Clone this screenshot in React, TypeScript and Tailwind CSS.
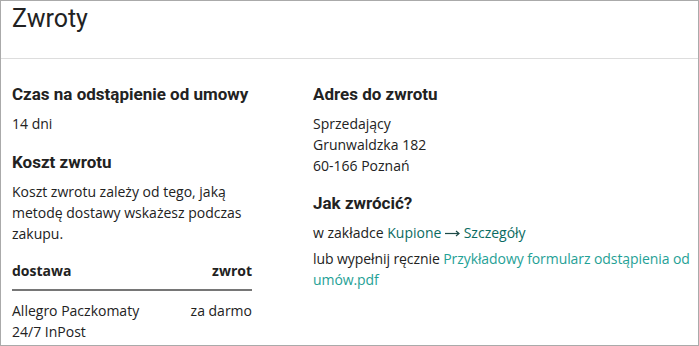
import React from "react";

export default function App() {
  const body = { fontFamily: '"Open Sans", "Liberation Sans", sans-serif' };
  const head = { fontFamily: 'Roboto, "Liberation Sans", sans-serif' };
  return (
    <div className="w-[699px] h-[346px] bg-white border border-[#aaaaaa] text-[#222222] overflow-hidden" style={body}>
      <div className="h-[58px] border-b border-[#dddddd] px-[11px]">
        <h1 className="text-[25px] leading-[32px] pt-[2px] font-normal" style={head}>Zwroty</h1>
      </div>
      <div className="flex pl-[11px] pt-[23px]">
        <div className="w-[240px] flex flex-col">
          <h2 className="text-[17px] leading-[24px] font-bold mb-[7px]" style={head}>Czas na odstąpienie od umowy</h2>
          <p className="text-[14px] leading-[21px]">14 dni</p>
          <h2 className="text-[17px] leading-[24px] font-bold mt-[16px] mb-[7px]" style={head}>Koszt zwrotu</h2>
          <p className="text-[14px] leading-[21px]">Koszt zwrotu zależy od tego, jaką metodę dostawy wskażesz podczas zakupu.</p>
          <div className="mt-[16px] flex justify-between text-[14px] leading-[21px] font-bold pb-[8px] border-b-2 border-[#767676]">
            <span>dostawa</span>
            <span>zwrot</span>
          </div>
          <div className="mt-[9px] flex justify-between text-[14px] leading-[21px]">
            <span className="w-[140px]">Allegro Paczkomaty 24/7 InPost</span>
            <span>za darmo</span>
          </div>
        </div>
        <div className="ml-[61px] flex-1 pr-[2px] flex flex-col">
          <h2 className="text-[17px] leading-[24px] font-bold mb-[7px]" style={head}>Adres do zwrotu</h2>
          <p className="text-[14px] leading-[21px]">Sprzedający<br />Grunwaldzka 182<br />60-166 Poznań</p>
          <h2 className="text-[17px] leading-[24px] font-bold mt-[15px] mb-[7px]" style={head}>Jak zwrócić?</h2>
          <p className="text-[14px] leading-[21px]">
            w zakładce <span className="text-[#0b6b62]">Kupione{" "}
              <svg className="inline-block align-[1px]" width="15" height="7" viewBox="0 0 15 7" fill="none" stroke="#1d4a46" strokeWidth="1.2">
                <path d="M0 3.5H14" />
                <path d="M11 1L14 3.5L11 6" />
              </svg>{" "}
              Szczegóły</span>
          </p>
          <p className="text-[14px] leading-[21px] mt-[5px] tracking-[-0.08px]">
            lub wypełnij ręcznie <span className="text-[#1fa196]">Przykładowy formularz odstąpienia od umów.pdf</span>
          </p>
        </div>
      </div>
    </div>
  );
}
